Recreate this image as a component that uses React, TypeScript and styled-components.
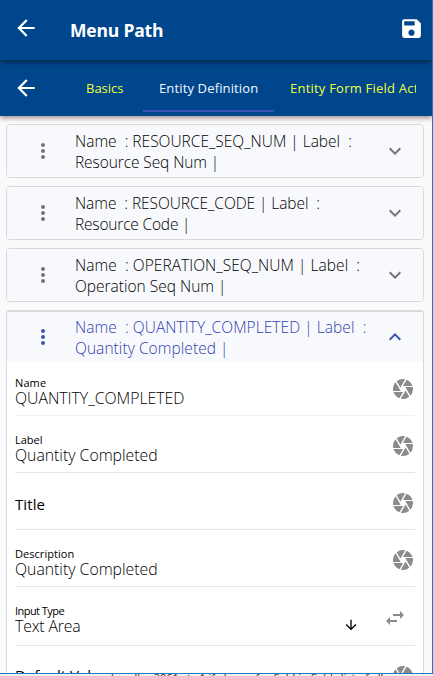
import React from "react";
import styled, { createGlobalStyle } from "styled-components";
import { MdSave, MdMoreVert, MdExpandMore, MdExpandLess, MdCamera, MdSwapHoriz, MdArrowDownward } from "react-icons/md";
import { IoMdArrowBack } from "react-icons/io";

const GlobalStyle = createGlobalStyle`
  * { box-sizing: border-box; }
  body { margin: 0; overflow: hidden; font-family: "Open Sans", "Noto Sans", sans-serif; }
  svg { display: block; flex: none; }
`;

const Screen = styled.div`
  height: 676px;
  display: flex;
  flex-direction: column;
  overflow: hidden;
  background: #f0f0f0;
`;

const Frame = styled.div`
  height: 674px;
  flex: none;
  display: flex;
  flex-direction: column;
  overflow: hidden;
  background: #fafafa;
  border-right: 1px solid #1c7bc9;
  border-bottom: 1px solid #1c7bc9;
`;

const Toolbar = styled.header`
  height: 60px;
  flex: none;
  display: flex;
  align-items: center;
  padding: 0 8px 4px 13px;
  background: #00468c;
  color: #fff;
  position: relative;
  z-index: 2;
  box-shadow: 0 2px 5px rgba(0, 0, 0, 0.5);
`;

const Title = styled.h1`
  margin: 4px auto 0 31px;
  font: 700 17.5px/24px "Open Sans", sans-serif;
  letter-spacing: -0.2px;
`;

const TabBar = styled.nav`
  height: 56px;
  flex: none;
  display: flex;
  align-items: center;
  padding: 0 16px 0 13px;
  background: #00468c;
  color: #fff;
  position: relative;
  z-index: 1;
  box-shadow: 0 2px 5px rgba(60, 0, 0, 0.45);
`;

const Tabs = styled.div`
  display: flex;
  flex: 1;
  min-width: 0;
  height: 56px;
  margin-left: 31px;
  overflow: hidden;
`;

const Tab = styled.div<{ $active?: boolean; $spacing: number; $width?: number }>`
  flex: none;
  width: ${(p) => (p.$width ? `${p.$width}px` : "auto")};
  height: 52px;
  padding: 4px 0 0 16px;
  line-height: 48px;
  font-size: 13px;
  letter-spacing: ${(p) => p.$spacing}px;
  white-space: nowrap;
  color: ${(p) => (p.$active ? "#f4f7ff" : "#eeff41")};
  border-bottom: 2px solid ${(p) => (p.$active ? "#3f51b5" : "transparent")};
`;

const List = styled.main`
  flex: 1;
  min-height: 0;
  display: flex;
  flex-direction: column;
  gap: 8px;
  padding: 8px 8px 0 6px;
`;

const Panel = styled.section<{ $open?: boolean }>`
  flex: none;
  border: 1px solid #d8d9dc;
  border-top-width: ${(p) => (p.$open ? 2 : 1)}px;
  border-radius: 4px;
  overflow: hidden;
  background: #fff;
`;

const PanelHeader = styled.div<{ $open?: boolean }>`
  display: flex;
  align-items: center;
  height: ${(p) => (p.$open ? 50 : 52)}px;
  padding: 0 16px 0 24px;
  background: #f8f9fc;
  color: ${(p) => (p.$open ? "#3f51b5" : "#757575")};
`;

const Summary = styled.div<{ $open?: boolean }>`
  flex: 1;
  margin: 2px 0 0 20px;
  color: ${(p) => (p.$open ? "#3041b0" : "#000")};
`;

const Line = styled.div<{ $spacing: number }>`
  font-size: 15.5px;
  font-weight: 330;
  line-height: 21px;
  white-space: pre;
  letter-spacing: ${(p) => p.$spacing}px;
`;

const Fields = styled.div`
  padding: 0 8px;
`;

const Field = styled.div<{ $height: number; $rule?: string }>`
  display: flex;
  height: ${(p) => p.$height}px;
  border-bottom: 1px solid ${(p) => p.$rule ?? "#e5e5e5"};
`;

const FieldText = styled.div<{ $top: number }>`
  flex: 1;
  padding-top: ${(p) => p.$top}px;
`;

const FieldLabel = styled.div<{ $spacing: number }>`
  font-size: 11px;
  line-height: 14px;
  color: #000;
  letter-spacing: ${(p) => p.$spacing}px;
`;

const FieldValue = styled.div<{ $spacing: number; $alone?: boolean }>`
  font-size: ${(p) => (p.$alone ? 15 : 15.8)}px;
  line-height: 16px;
  font-weight: ${(p) => (p.$alone ? 400 : 330)};
  color: #000;
  letter-spacing: ${(p) => p.$spacing}px;
`;

const Shutter = styled.div<{ $top: number }>`
  color: #8b8b8b;
  padding-top: ${(p) => p.$top}px;
`;

const Swap = styled.div`
  display: flex;
  gap: 24px;
  padding: 19px 8px 0 0;
  color: #8b8b8b;
`;

const DownArrow = styled(MdArrowDownward)`
  color: #000;
  stroke: #000;
  margin-top: 11px;
`;

const Footer = styled.div`
  height: 2px;
  flex: none;
  overflow: hidden;
  padding-left: 111px;
  color: #4b2030;
  font-size: 11px;
  line-height: 8px;
  white-space: nowrap;
`;

const panels = [
  { a: "Name  : RESOURCE_SEQ_NUM | Label  :", b: "Resource Seq Num |", sa: 0, sb: -0.09 },
  { a: "Name  : RESOURCE_CODE | Label  :", b: "Resource Code |", sa: -0.06, sb: -0.18 },
  { a: "Name  : OPERATION_SEQ_NUM | Label  :", b: "Operation Seq Num |", sa: 0.05, sb: 0 },
  { a: "Name  : QUANTITY_COMPLETED | Label  :", b: "Quantity Completed |", sa: 0.06, sb: 0.06, open: true },
];

const fields = [
  { label: "Name", value: "QUANTITY_COMPLETED", h: 54, ls: 0.1, vs: 0, top: 14, icon: 15, rule: "#f2f2f2" },
  { label: "Label", value: "Quantity Completed", h: 57, ls: 0, vs: 0, top: 17, icon: 18 },
  { value: "Title", h: 57, ls: 0, vs: 0.1, top: 23, icon: 18 },
  { label: "Description", value: "Quantity Completed", h: 57, ls: 0.05, vs: 0, top: 17, icon: 18 },
  { label: "Input Type", value: "Text Area", h: 59, ls: -0.55, vs: -0.15, top: 17, icon: 19, swap: true },
  { value: "Default Value", h: 57, ls: 0, vs: 0, top: 21, icon: 18 },
];

export default function App() {
  return (
    <Screen>
      <GlobalStyle />
      <Frame>
        <Toolbar>
          <IoMdArrowBack size={26} />
          <Title>Menu Path</Title>
          <MdSave size={25} />
        </Toolbar>
        <TabBar>
          <IoMdArrowBack size={26} />
          <Tabs>
            <Tab $spacing={0} $width={73}>Basics</Tab>
            <Tab $active $spacing={0.14} $width={131}>Entity Definition</Tab>
            <Tab $spacing={0.22}>Entity Form Field Actions</Tab>
          </Tabs>
        </TabBar>
        <List>
          {panels.map((p) => (
            <Panel key={p.b} $open={p.open}>
              <PanelHeader $open={p.open}>
                <MdMoreVert size={24} />
                <Summary $open={p.open}>
                  <Line $spacing={p.sa}>{p.a}</Line>
                  <Line $spacing={p.sb}>{p.b}</Line>
                </Summary>
                {p.open ? <MdExpandLess size={24} /> : <MdExpandMore size={24} />}
              </PanelHeader>
              {p.open && (
                <Fields>
                  {fields.map((f) => (
                    <Field key={f.label ?? f.value} $height={f.h} $rule={f.rule}>
                      <FieldText $top={f.top}>
                        {f.label && <FieldLabel $spacing={f.ls}>{f.label}</FieldLabel>}
                        <FieldValue $spacing={f.vs} $alone={!f.label}>{f.value}</FieldValue>
                      </FieldText>
                      {f.swap ? (
                        <Swap>
                          <DownArrow size={16} />
                          <MdSwapHoriz size={24} />
                        </Swap>
                      ) : (
                        <Shutter $top={f.icon}>
                          <MdCamera size={24} />
                        </Shutter>
                      )}
                    </Field>
                  ))}
                </Fields>
              )}
            </Panel>
          ))}
        </List>
      </Frame>
      <Footer>handler 3061 st · 1 if · key · · for field in fields list of all</Footer>
    </Screen>
  );
}
